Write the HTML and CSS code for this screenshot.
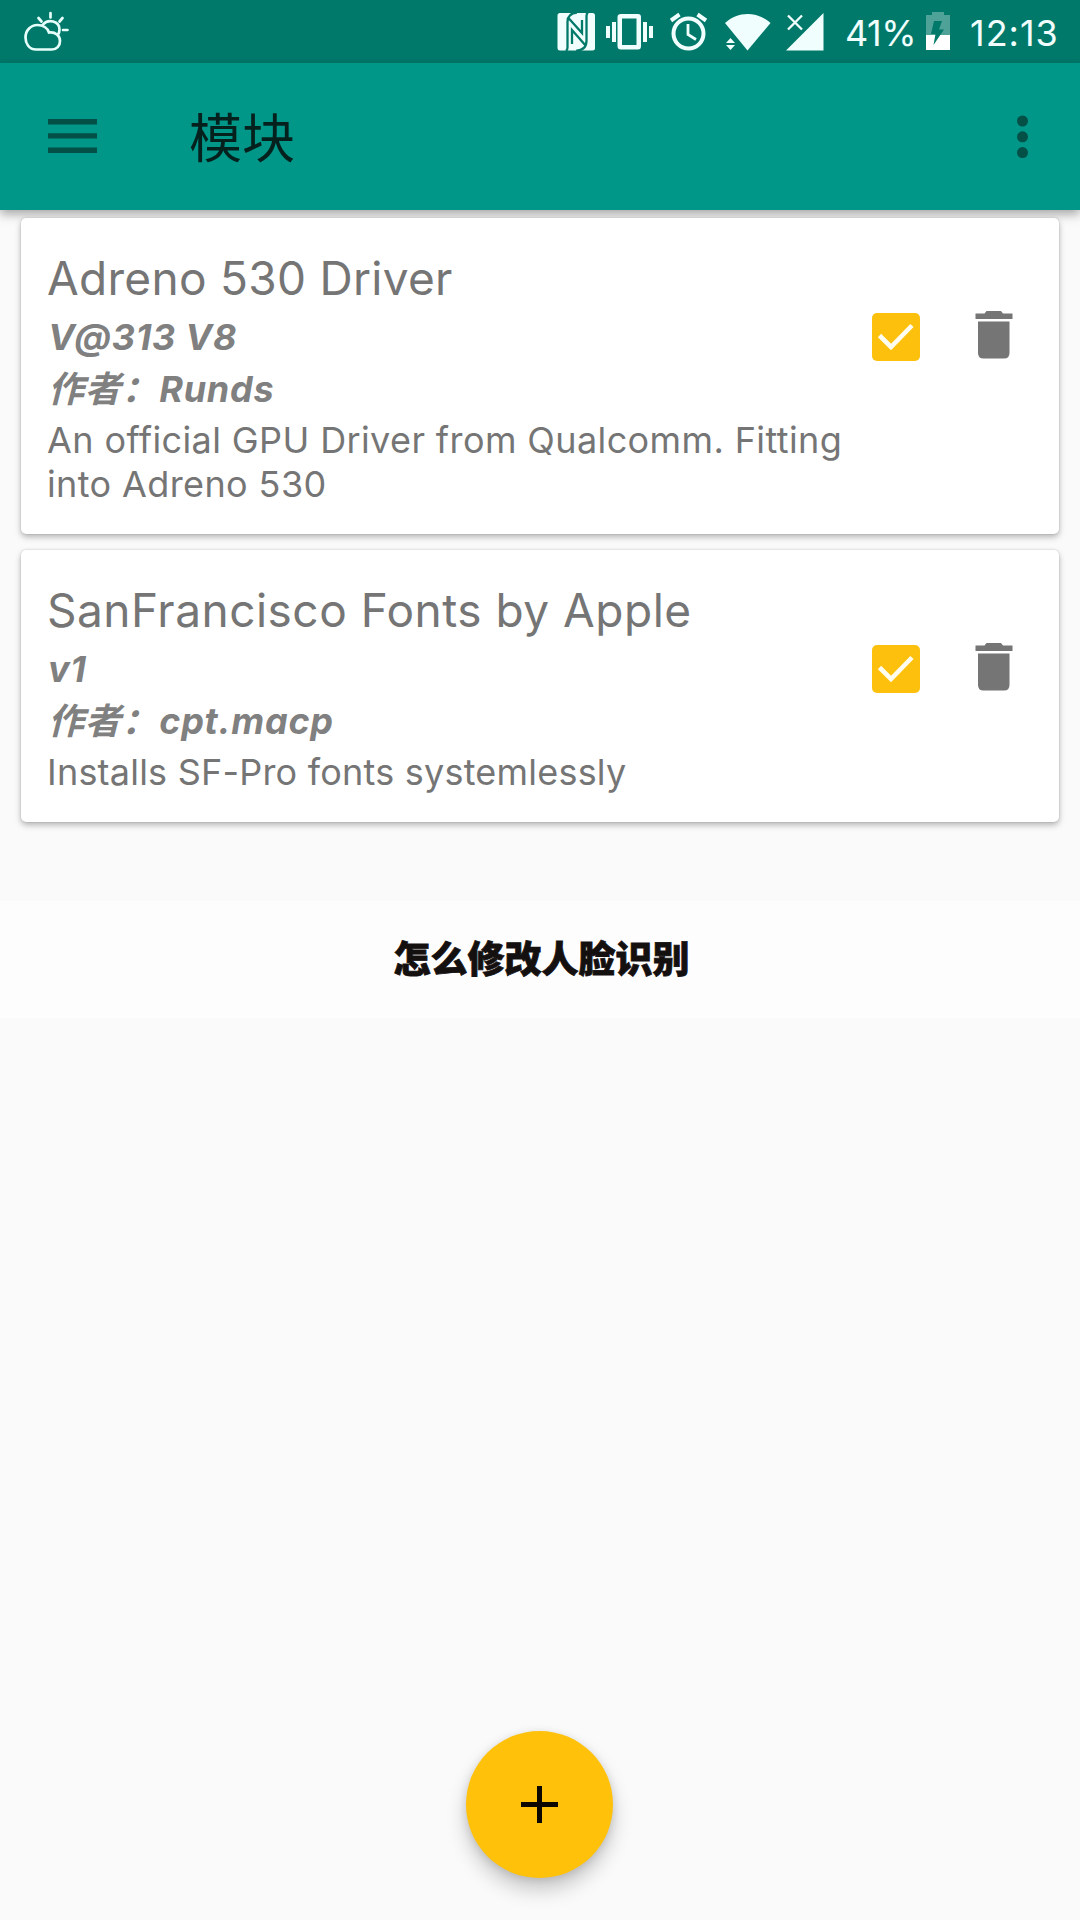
FILE: index.html
```html
<!DOCTYPE html>
<html lang="zh-CN">
<head>
<meta charset="utf-8">
<title>模块</title>
<link rel="stylesheet" href="styles.css">
</head>
<body>
<div class="screen">
  <div class="status-bar">
    <svg class="weather" width="54" height="63" viewBox="20 0 54 63" fill="none" stroke="#e6fffb" stroke-width="2.700" stroke-linecap="round">
      <path d="M36 49.500C29 49.500 25.500 43.500 25.500 37.500C25.500 30 31 25 37.500 25C43 25 47.500 28 49 32.500C55.500 31.500 60 36 60 41C60 46 56.500 49.500 52 49.500Z"/>
      <path d="M43 24.500C48 18.500 59.500 21 59.500 29.500C59.500 31.500 59 33 58 34.500M50.500 13V17.500M38.500 18L41.500 21.500M62.500 18L59.500 21.500M63 30H67.500"/>
    </svg>
    <div class="status-right">
      <svg width="45" height="63" viewBox="555 0 45 63">
        <rect x="557.500" y="13" width="37.500" height="37.500" rx="2.500" fill="#f0fffd"/>
        <path d="M577 12.500Q567.500 13.500 567.500 22V47.500Q567.500 50 566 51M576 50.800Q586.500 50 586.500 41V16Q586.500 13.500 588 12.500M568 17.500L582 33V20M586 46L572 30V44" fill="none" stroke="#00796b" stroke-width="2.300"/>
      </svg>
      <svg width="60" height="63" viewBox="600 0 60 63" fill="#f0fffd">
        <path d="M621 14H638Q641 14 641 17V46Q641 49.500 638 49.500H621Q617.500 49.500 617.500 46V17Q617.500 14 621 14ZM622 18.500V45H636.500V18.500Z" fill-rule="evenodd"/>
        <path d="M606 26H610V38H606ZM612 22H616V42H612ZM643 22H647V42H643ZM649 26H653V38H649Z"/>
      </svg>
      <svg width="57" height="63" viewBox="660 0 57 63" fill="none" stroke="#f0fffd" stroke-width="4">
        <circle cx="688.500" cy="33.500" r="15"/>
        <path d="M671 20.500L679.500 14.500M706 20.500L697.500 14.500"/>
        <path d="M688 24V34.500L696 39.500" stroke-width="2.800"/>
      </svg>
      <svg width="63" height="63" viewBox="717 0 63 63" fill="#f0fffd">
        <path d="M747.500 50.500L725 23C738 11 757 11 770.500 23Z"/>
        <path d="M730.500 38L735 43H726ZM730.500 50L735 45H726Z"/>
      </svg>
      <svg width="66" height="63" viewBox="780 0 66 63">
        <path d="M823.500 13V50.500H786Z" fill="#f0fffd"/>
        <path d="M786 13H805L806 29L786 38Z" fill="#00796b"/>
        <path d="M788 15.500L802 29.500M802 15.500L788 29.500" stroke="#f0fffd" stroke-width="2.300"/>
      </svg>
      <span class="percent">41%</span>
      <svg width="45" height="63" viewBox="925 0 45 63">
        <path d="M926 15H932V12H944V15H950V35H926Z" fill="#4fa297"/>
        <path d="M926 35H950V50H926Z" fill="#fff"/>
        <path d="M934 21H942L939 29.500H944L933.500 45L935.500 34H931Z" fill="#00796b"/>
      </svg>
      <span class="clock">12:13</span>
    </div>
  </div>

  <header class="app-bar">
    <svg width="49" height="35" viewBox="0 0 49 35" fill="#044f46">
      <path d="M0 0H49V5.500H0ZM0 14.300H49V19.500H0ZM0 28.500H49V34H0Z"/>
    </svg>
    <h1 class="app-title">模块</h1>
    <svg class="more" width="12" height="44" viewBox="0 0 12 44" fill="#044f46">
      <circle cx="5.500" cy="6" r="5.500"/><circle cx="5.500" cy="21.800" r="5.500"/><circle cx="5.500" cy="37.600" r="5.500"/>
    </svg>
  </header>

  <main class="modules">
    <article class="card">
      <div class="info">
        <h2 class="name name-driver">Adreno 530 Driver</h2>
        <p class="meta">V@313 V8</p>
        <p class="meta">作者：<span class="author">Runds</span></p>
        <p class="desc desc-driver">An official GPU Driver from Qualcomm. Fitting<br>into Adreno 530</p>
      </div>
      <div class="actions">
        <svg width="48" height="48" viewBox="0 0 48 48"><rect width="48" height="48" rx="5" fill="#fdc00d"/><path d="M7.500 22.500L19 34L40 12.500" fill="none" stroke="#fffdf0" stroke-width="4.600"/></svg>
        <svg class="trash" width="38" height="48" viewBox="0 0 38 48" fill="#757575"><path d="M0.500 2.500H9.500L11.500 0H26L28 2.500H37.500V8H0.500ZM3 10.500H34.500V42Q34.500 47.500 29 47.500H8.500Q3 47.500 3 42Z"/></svg>
      </div>
    </article>
    <article class="card">
      <div class="info">
        <h2 class="name name-fonts">SanFrancisco Fonts by Apple</h2>
        <p class="meta">v1</p>
        <p class="meta">作者：<span class="author">cpt.macp</span></p>
        <p class="desc desc-fonts">Installs SF-Pro fonts systemlessly</p>
      </div>
      <div class="actions">
        <svg width="48" height="48" viewBox="0 0 48 48"><rect width="48" height="48" rx="5" fill="#fdc00d"/><path d="M7.500 22.500L19 34L40 12.500" fill="none" stroke="#fffdf0" stroke-width="4.600"/></svg>
        <svg class="trash" width="38" height="48" viewBox="0 0 38 48" fill="#757575"><path d="M0.500 2.500H9.500L11.500 0H26L28 2.500H37.500V8H0.500ZM3 10.500H34.500V42Q34.500 47.500 29 47.500H8.500Q3 47.500 3 42Z"/></svg>
      </div>
    </article>
  </main>

  <div class="caption">怎么修改人脸识别</div>

  <footer class="bottom">
    <div class="fab">
      <svg width="37" height="37" viewBox="0 0 37 37"><path d="M18.500 0V37M0 18.500H37" stroke="#0c0800" stroke-width="5"/></svg>
    </div>
  </footer>
</div>
</body>
</html>
```
FILE: styles.css
```css
* {
  box-sizing: border-box;
  margin: 0;
}

body {
  background: #fafafa;
  font-family: Inter, "Noto Sans CJK SC", sans-serif;
}

svg {
  display: block;
  flex: none;
}

.screen {
  width: 1080px;
  height: 1920px;
  display: flex;
  flex-direction: column;
  overflow: hidden;
}

.status-bar {
  height: 63px;
  flex: none;
  padding: 0 20px;
  display: flex;
  justify-content: space-between;
  background: #00796b;
  color: #f0fffd;
  font-size: 36px;
  line-height: 66px;
}

.status-right {
  width: 505px;
  display: flex;
}

.percent,
.clock {
  flex: none;
  white-space: nowrap;
}

.percent {
  width: 80px;
  margin-left: -1px;
  letter-spacing: -0.5px;
}

.clock {
  letter-spacing: 1px;
}

.app-bar {
  height: 147px;
  flex: none;
  padding: 0 51px 0 48px;
  display: flex;
  align-items: center;
  background: #009688;
  box-shadow: 0 4px 10px rgba(0, 0, 0, 0.35);
}

.app-title {
  margin-left: 92px;
  padding-top: 4px;
  color: #04211e;
  font-size: 53px;
  font-weight: 400;
  line-height: 60px;
}

.more {
  margin-left: auto;
}

.modules {
  padding: 8px 21px 0;
  display: flex;
  flex-direction: column;
  gap: 16px;
}

.card {
  display: flex;
  justify-content: space-between;
  padding: 32px 46px 28px 26px;
  background: #fff;
  border-radius: 5px;
  box-shadow: 0 3px 6px rgba(0, 0, 0, 0.28), 0 0 2px rgba(0, 0, 0, 0.18);
}

.info {
  white-space: nowrap;
  color: #757575;
}

.name {
  margin-bottom: 5px;
  font-size: 46px;
  font-weight: 400;
  line-height: 56px;
}

.name-driver {
  letter-spacing: 0.29px;
}

.name-fonts {
  letter-spacing: 0.5px;
}

.meta {
  padding-left: 1px;
  color: #808080;
  font-size: 36px;
  font-style: italic;
  font-weight: 700;
  letter-spacing: 0.75px;
  line-height: 52px;
}

.author {
  margin-left: 1px;
}

.desc {
  margin-top: 3px;
  font-size: 36px;
  line-height: 44px;
}

.desc-driver {
  letter-spacing: 0.39px;
}

.desc-fonts {
  letter-spacing: 0.22px;
}

.actions {
  display: flex;
  gap: 55px;
  padding-top: 63px;
}

.trash {
  margin-top: -2px;
}

.caption {
  height: 117px;
  flex: none;
  margin-top: 79px;
  padding-left: 3px;
  background: #fdfdfd;
  color: #151010;
  font-family: "Noto Sans CJK SC", sans-serif;
  font-size: 37px;
  font-weight: 900;
  -webkit-text-stroke: 0.8px #151010;
  line-height: 112px;
  text-align: center;
}

.bottom {
  margin-top: auto;
  padding: 0 2px 42px 0;
  display: flex;
  justify-content: center;
}

.fab {
  width: 147px;
  height: 147px;
  border-radius: 50%;
  display: flex;
  align-items: center;
  justify-content: center;
  background: #ffc10a;
  box-shadow: 0 12px 20px rgba(0, 0, 0, 0.2), 0 2px 8px rgba(0, 0, 0, 0.12);
}
```
